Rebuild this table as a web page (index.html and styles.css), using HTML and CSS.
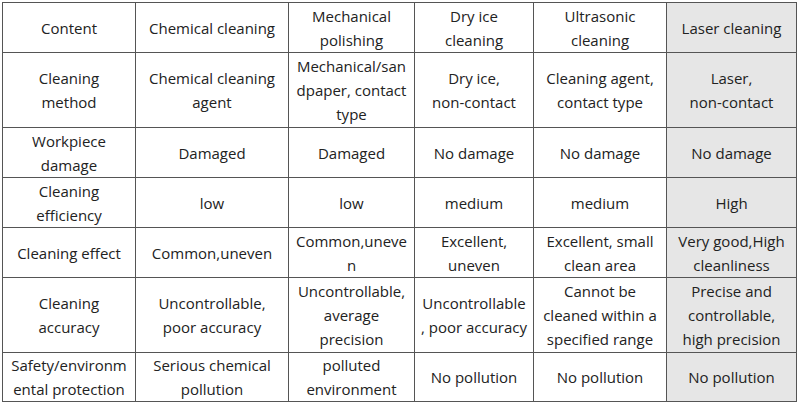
FILE: index.html
```html
<!DOCTYPE html>
<html>
<head>
<meta charset="utf-8">
<link rel="stylesheet" href="styles.css">
</head>
<body>
<table class="grid">
  <colgroup>
    <col class="c1"><col class="c2"><col class="c3"><col class="c4"><col class="c5"><col class="c6">
  </colgroup>
  <tr class="r50">
    <td>Content</td>
    <td>Chemical cleaning</td>
    <td>Mechanical<br>polishing</td>
    <td>Dry ice<br>cleaning</td>
    <td>Ultrasonic<br>cleaning</td>
    <td class="hl">Laser cleaning</td>
  </tr>
  <tr class="r75">
    <td>Cleaning<br>method</td>
    <td>Chemical cleaning<br>agent</td>
    <td>Mechanical/san<br>dpaper, contact<br>type</td>
    <td>Dry ice,<br>non-contact</td>
    <td>Cleaning agent,<br>contact type</td>
    <td class="hl">Laser,<br>non-contact</td>
  </tr>
  <tr class="r50">
    <td>Workpiece<br>damage</td>
    <td>Damaged</td>
    <td>Damaged</td>
    <td>No damage</td>
    <td>No damage</td>
    <td class="hl">No damage</td>
  </tr>
  <tr class="r50">
    <td>Cleaning<br>efficiency</td>
    <td>low</td>
    <td>low</td>
    <td>medium</td>
    <td>medium</td>
    <td class="hl">High</td>
  </tr>
  <tr class="r50">
    <td>Cleaning effect</td>
    <td>Common,uneven</td>
    <td>Common,uneve<br>n</td>
    <td>Excellent,<br>uneven</td>
    <td>Excellent, small<br>clean area</td>
    <td class="hl">Very good,High<br>cleanliness</td>
  </tr>
  <tr class="r75">
    <td>Cleaning<br>accuracy</td>
    <td>Uncontrollable,<br>poor accuracy</td>
    <td>Uncontrollable,<br>average<br>precision</td>
    <td>Uncontrollable<br>, poor accuracy</td>
    <td>Cannot be<br>cleaned within a<br>specified range</td>
    <td class="hl">Precise and<br>controllable,<br>high precision</td>
  </tr>
  <tr class="r49">
    <td>Safety/environm<br>ental protection</td>
    <td>Serious chemical<br>pollution</td>
    <td>polluted<br>environment</td>
    <td>No pollution</td>
    <td>No pollution</td>
    <td class="hl">No pollution</td>
  </tr>
</table>
</body>
</html>
```
FILE: styles.css
```css
html, body {
  margin: 0;
  padding: 0;
  background: #ffffff;
}
body {
  padding: 2px 0 0 2px;
}
.grid {
  border-collapse: collapse;
  table-layout: fixed;
  width: 794px;
  font-family: "Open Sans", "Noto Sans", sans-serif;
  font-size: 15px;
  line-height: 24px;
  color: #222;
}
.c1 { width: 133px; }
.c2 { width: 153px; }
.c3 { width: 126px; }
.c4 { width: 119px; }
.c5 { width: 133px; }
.c6 { width: 130px; }
.grid td {
  border: 1px solid #555;
  padding: 0;
  text-align: center;
  vertical-align: middle;
  white-space: nowrap;
  overflow: hidden;
}
.grid td.hl {
  background: #e6e6e6;
}
.r50 { height: 50px; }
.r75 { height: 75px; }
.r49 { height: 49px; }
```
